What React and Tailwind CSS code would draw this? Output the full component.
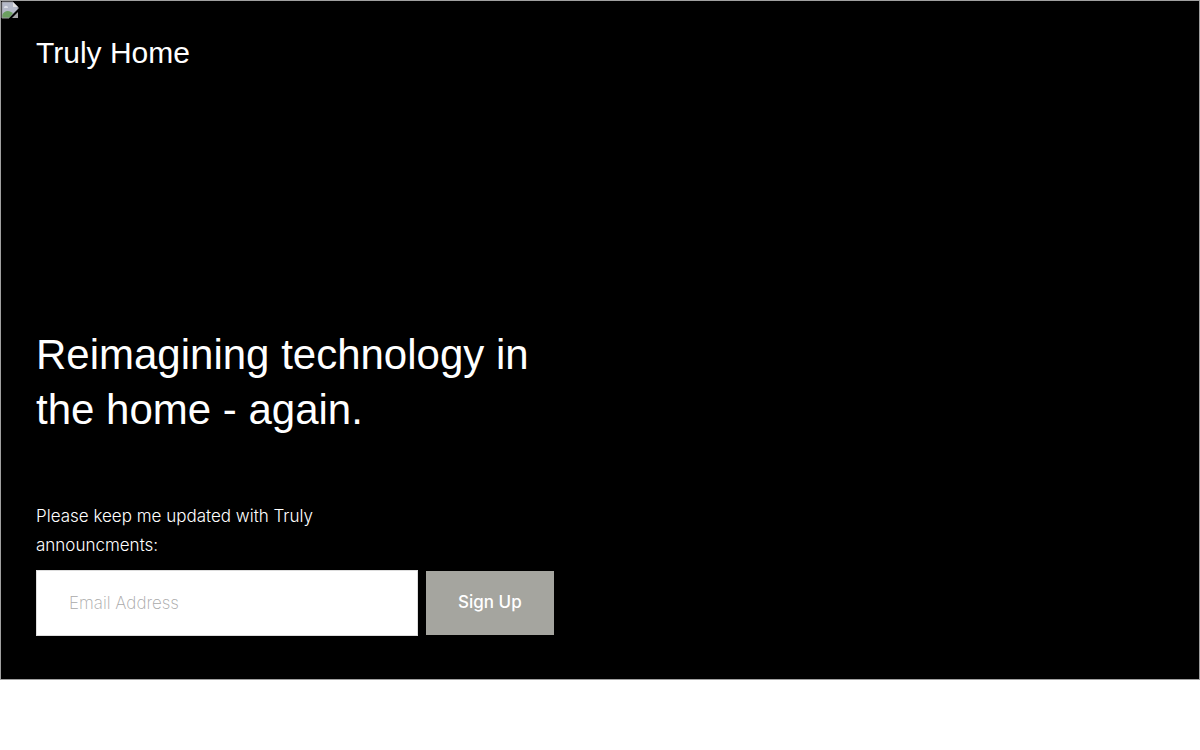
import React, { useState } from 'react';

const BrokenImage = () => (
    <svg className="absolute left-0 top-0" width="18" height="18" viewBox="0 0 18 18" aria-hidden="true">
        <path d="M1 1h11l5 5v2L8 17H1z" fill="#b4b9c8" />
        <path d="M1 17v-3c2-4 6-5 9-3l2 1-4 5z" fill="#6b9f60" />
        <path d="M3 7c0-3 4-3 4 0z" fill="#dcdfe6" />
        <path d="M12 1v5h5z" fill="#e2e2e2" />
        <path d="M17 6v2M17 6l-5-5H1v16h7" fill="none" stroke="#9b9ba0" />
        <path d="M17 11v6h-6z" fill="#a5a5a8" />
    </svg>
);

const App = () => {
    const [email, setEmail] = useState('');

    return (
        <div className="min-h-screen bg-white pb-[70px]">
            <div className="relative flex min-h-[calc(100vh-70px)] flex-col justify-between border border-[#a0a0a0] bg-black px-[35px] pt-8 pb-[43px] text-white">
                <BrokenImage />

                <header>
                    <a href="#" className="font-['Liberation_Sans',sans-serif] text-[30px] leading-10">
                        Truly Home
                    </a>
                </header>

                <main className="max-w-[520px]">
                    <h1 className="font-['Liberation_Sans',sans-serif] text-[42px] leading-[55px]">
                        Reimagining technology in the home - again.
                    </h1>

                    {/* Newsletter */}
                    <form className="mt-[65px] font-['Inter',sans-serif] text-[17px]" onSubmit={(e) => e.preventDefault()}>
                        <label htmlFor="email" className="block max-w-[300px] leading-[29px] font-light">
                            Please keep me updated with Truly announcments:
                        </label>
                        <div className="mt-2.5 flex items-center gap-2">
                            <input
                                id="email"
                                type="email"
                                value={email}
                                onChange={(e) => setEmail(e.target.value)}
                                placeholder="Email Address"
                                className="h-[66px] w-[382px] shrink-0 border border-[#dddddd] bg-white px-8 font-extralight text-black placeholder:text-[#a9a9a9]"
                            />
                            <button type="submit" className="h-16 shrink-0 bg-[#a5a59f] px-8 font-medium">
                                Sign Up
                            </button>
                        </div>
                    </form>
                </main>
            </div>
        </div>
    );
};

export default App;
